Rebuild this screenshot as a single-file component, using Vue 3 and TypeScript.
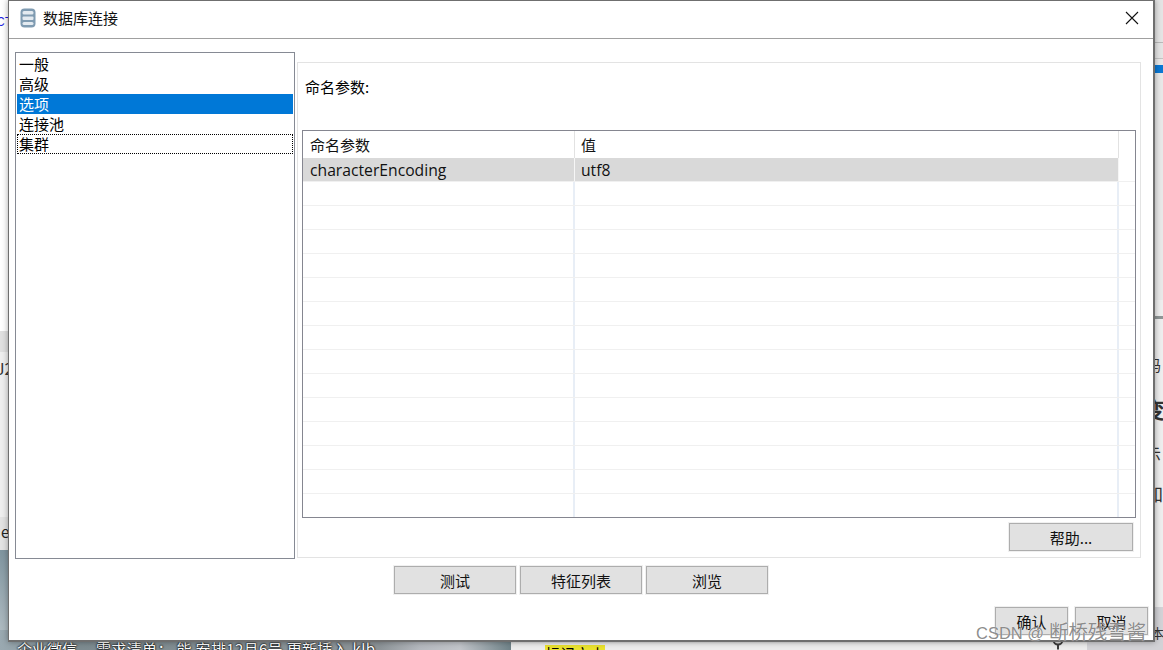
<script setup lang="ts">
const navItems = ['一般', '高级', '选项', '连接池', '集群']
const selectedNav = 2
const focusedNav = 4
const emptyRows = Array.from({ length: 14 }, (_, i) => i)
const footerActions = ['测试', '特征列表', '浏览']
</script>

<template>
  <div class="desktop">
    <!-- stuff behind the dialog -->
    <div class="bg-left">
      <span class="bg-left__code">CT</span>
      <span class="bg-left__num">J2</span>
      <span class="bg-left__e">e</span>
    </div>
    <div class="bg-bottom">
      <div class="bg-bottom__photo">
        <span>企业微信</span>
        <span class="bg-bottom__msg">需求清单： 能 安排12月6号 更新插入.klb</span>
      </div>
      <div class="bg-bottom__page">
        <mark>标记文本</mark>
        <svg class="bg-bottom__gear" width="16" height="12" viewBox="0 0 16 12">
          <circle cx="8" cy="2" r="4.500" fill="none" stroke="#3d3d3d" stroke-width="2" />
          <path d="M8 6.500v5" stroke="#3d3d3d" stroke-width="2" />
        </svg>
        <span class="bg-bottom__band"></span>
      </div>
    </div>
    <div class="bg-right">
      <span class="bg-right__tab"></span>
      <span class="bg-right__t1">码</span>
      <span class="bg-right__t2">变</span>
      <span class="bg-right__t3">示</span>
      <span class="bg-right__t4">加</span>
      <span class="bg-right__t5">本</span>
    </div>

    <div class="dialog">
      <header class="titlebar">
        <svg class="titlebar__icon" width="16" height="20" viewBox="0 0 16 20">
          <rect x="0.500" y="0.500" width="15" height="19" rx="4" fill="#7f9bb1" />
          <rect x="2.500" y="3" width="11" height="3.500" rx="1.500" fill="#e3eaf0" />
          <rect x="2.500" y="8.500" width="11" height="3.500" rx="1" fill="#e3eaf0" />
          <rect x="2.500" y="14" width="11" height="3" rx="1.500" fill="#e3eaf0" />
        </svg>
        <span class="titlebar__text">数据库连接</span>
        <svg class="titlebar__close" width="14" height="14" viewBox="0 0 14 14">
          <path d="M1 1l12 12M13 1L1 13" stroke="#111" stroke-width="1.1" fill="none" />
        </svg>
      </header>

      <div class="body">
        <ul class="nav">
          <li
            v-for="(item, i) in navItems"
            :key="item"
            class="nav__item"
            :class="{ 'nav__item--selected': i === selectedNav, 'nav__item--focus': i === focusedNav }"
          >{{ item }}</li>
        </ul>

        <section class="panel">
          <div class="panel__label">命名参数:</div>
          <div class="grid">
            <div class="grid__row grid__row--head">
              <div class="grid__cell grid__cell--name">命名参数</div>
              <div class="grid__cell grid__cell--value">值</div>
              <div class="grid__cell grid__cell--tail"></div>
            </div>
            <div class="grid__row grid__row--selected">
              <div class="grid__cell grid__cell--name">characterEncoding</div>
              <div class="grid__cell grid__cell--value">utf8</div>
              <div class="grid__cell grid__cell--tail"></div>
            </div>
            <div v-for="r in emptyRows" :key="r" class="grid__row">
              <div class="grid__cell grid__cell--name"></div>
              <div class="grid__cell grid__cell--value"></div>
              <div class="grid__cell grid__cell--tail"></div>
            </div>
          </div>
          <div class="panel__foot">
            <button class="btn btn--help">帮助...</button>
          </div>
        </section>
      </div>

      <div class="actions">
        <button v-for="a in footerActions" :key="a" class="btn btn--action">{{ a }}</button>
      </div>

      <div class="confirm">
        <button class="btn btn--confirm">确认</button>
        <button class="btn btn--confirm">取消</button>
      </div>
    </div>

    <div class="watermark"><span class="watermark__latin">CSDN @</span>断桥残雪酱</div>
  </div>
</template>

<style>
html,
body {
  margin: 0;
  background: #e9e9e9;
  overflow: hidden;
}
</style>

<style scoped>
.desktop {
  position: relative;
  width: 1163px;
  height: 650px;
  overflow: hidden;
  font-family: "Noto Sans CJK SC", "Noto Sans", sans-serif;
  color: #000;
}

/* background behind the dialog */
.bg-left {
  position: absolute;
  left: 0;
  top: 0;
  width: 9px;
  height: 650px;
  background: linear-gradient(#fff 0 331px, #e0e0e0 331px 352px, #efefef 352px 517px, #e3e3e3 517px 550px, #7f949e 550px, #b9c3c9 650px);
  overflow: hidden;
}

.bg-left__code {
  position: absolute;
  left: -3px;
  top: 15px;
  font: 13px "Liberation Mono", monospace;
  color: #1a1ae0;
}

.bg-left__num {
  position: absolute;
  left: -4px;
  top: 358px;
  font-size: 16px;
  line-height: 20px;
  color: #333;
}

.bg-left__e {
  position: absolute;
  left: 1px;
  top: 522px;
  font-size: 15px;
  line-height: 20px;
  color: #222;
}

.bg-right {
  position: absolute;
  right: 0;
  top: 0;
  width: 10px;
  height: 650px;
  background: linear-gradient(#e4e4e4 0 42px, #b9b9b9 42px 43px, #e4e4e4 43px 58px, #c4c4c4 58px 59px, #e8e8e8 59px 65px, #0a78d4 65px 73px, #e8e8e8 73px 300px, #eee 300px 607px, #d2d2d6 607px);
  overflow: hidden;
}

.bg-right__tab {
  position: absolute;
  left: 0;
  top: 316px;
  width: 10px;
  height: 3px;
  background: #8f9696;
}

.bg-right__t1,
.bg-right__t2,
.bg-right__t3,
.bg-right__t4,
.bg-right__t5 {
  position: absolute;
  left: -7px;
  color: #333;
  font-size: 15px;
  line-height: 20px;
}

.bg-right__t1 { top: 355px; }
.bg-right__t2 { top: 395px; left: -10px; font-size: 22px; font-weight: 700; line-height: 26px; }
.bg-right__t3 { top: 443px; left: -8px; font-size: 16px; }
.bg-right__t4 { top: 483px; left: -8px; font-size: 18px; }
.bg-right__t5 { top: 623px; left: -2px; font-size: 13px; }

.bg-bottom {
  position: absolute;
  left: 0;
  right: 0;
  bottom: 0;
  height: 20px;
  display: flex;
  overflow: hidden;
}

.bg-bottom__photo {
  width: 511px;
  display: flex;
  align-items: flex-start;
  gap: 19px;
  box-sizing: border-box;
  padding: 10px 0 0 17px;
  background: linear-gradient(90deg, #9aa9b1, #7d8b90 80px, #8d9498 380px, #b5b9bf 420px, #c2c5ca 460px, #6f8288);
  color: #fff;
  font-size: 15px;
  line-height: 18px;
  text-shadow: 0 0 2px #000, 0 0 2px #000;
}

.bg-bottom__msg {
  white-space: nowrap;
  letter-spacing: 0.35px;
}

.bg-bottom__page {
  position: relative;
  flex: 1;
  background: linear-gradient(#c9c9c9 9px, #ececec 14px);
}

.bg-bottom__page mark {
  position: absolute;
  left: 34px;
  bottom: 0;
  display: block;
  height: 5px;
  overflow: hidden;
  background: #eae22e;
  font-size: 15px;
  line-height: 17px;
}

.bg-bottom__gear {
  position: absolute;
  left: 539px;
  bottom: 0;
}

.bg-bottom__band {
  position: absolute;
  left: 576px;
  bottom: 0;
  width: 76px;
  height: 20px;
  background: #d2d2d6;
}

/* dialog */
.dialog {
  position: absolute;
  left: 8px;
  top: 0;
  width: 1147px;
  height: 642px;
  box-sizing: border-box;
  border: 1px solid #6f6f6f;
  border-width: 1px 2px 2px 1px;
  background: #fff;
  display: flex;
  flex-direction: column;
  box-shadow: 0 0 6px rgba(0, 0, 0, 0.35);
}

.titlebar {
  height: 38px;
  flex: none;
  box-sizing: border-box;
  border-bottom: 1px solid #a0a0a0;
  display: flex;
  align-items: center;
  padding: 0 14px 3px 11px;
}

.titlebar__icon {
  margin-right: 7px;
}

.titlebar__text {
  font-size: 15px;
  line-height: 20px;
  color: #111;
}

.titlebar__close {
  margin-left: auto;
}

.body {
  display: flex;
  align-items: flex-start;
  gap: 2px;
  padding: 13px 6px 0 6px;
}

.nav {
  list-style: none;
  margin: 0;
  padding: 1px;
  width: 280px;
  height: 507px;
  box-sizing: border-box;
  border: 1px solid #868a94;
}

.nav__item {
  height: 20px;
  box-sizing: border-box;
  padding-left: 2px;
  font-size: 15px;
  line-height: 20px;
}

.nav__item--selected {
  background: #0078d7;
  color: #fff;
}

.nav__item--focus {
  outline: 1px dotted #000;
  outline-offset: -1px;
}

.panel {
  width: 844px;
  height: 496px;
  margin-top: 10px;
  box-sizing: border-box;
  border: 1px solid #e3e3e3;
  padding: 0 4px;
  display: flex;
  flex-direction: column;
}

.panel__label {
  height: 67px;
  flex: none;
  padding: 14px 0 0 3px;
  box-sizing: border-box;
  font-size: 15px;
  line-height: 20px;
}

.grid {
  height: 388px;
  flex: none;
  box-sizing: border-box;
  border: 1px solid #858690;
  overflow: hidden;
}

.grid__row {
  height: 24px;
  display: flex;
  box-sizing: border-box;
  border-bottom: 1px solid #f0f0f0;
}

.grid__row--head {
  height: 27px;
  border-bottom: 0;
}

.grid__cell {
  box-sizing: border-box;
  padding-left: 7px;
  font-size: 15px;
  line-height: 28px;
  color: #111;
}

.grid__row--selected .grid__cell {
  font-family: "Open Sans", "Noto Sans", sans-serif;
  font-size: 15.7px;
  line-height: 25px;
}

.grid__cell--name {
  width: 272px;
  flex: none;
  border-right: 2px solid #e8eef6;
}

.grid__cell--value {
  width: 544px;
  flex: none;
  padding-left: 6px;
  border-right: 2px solid #e8eef6;
}

.grid__cell--tail {
  flex: 1;
}

.grid__row--head .grid__cell--name,
.grid__row--head .grid__cell--value {
  border-right: 1px solid #e2e2e2;
}

.grid__row--selected .grid__cell--name,
.grid__row--selected .grid__cell--value {
  background: #d9d9d9;
  border-right: 1px solid #f6f6f6;
}

.panel__foot {
  display: flex;
  justify-content: flex-end;
  padding: 5px 3px 0 0;
}

.btn {
  box-sizing: border-box;
  border: 1px solid #adadad;
  outline: 1px solid #f0f0f0;
  background: #e1e1e1;
  padding: 0;
  font-family: inherit;
  font-size: 15px;
  color: #111;
  height: 28px;
}

.btn--help {
  width: 124px;
}

.actions {
  display: flex;
  justify-content: center;
  gap: 4px;
  padding: 7px 0 0 0;
}

.btn--action {
  width: 122px;
}

.confirm {
  display: flex;
  justify-content: flex-end;
  gap: 7px;
  padding: 13px 5px 0 0;
}

.btn--confirm {
  width: 73px;
}

.watermark {
  position: absolute;
  left: 976px;
  top: 620px;
  font-size: 19.4px;
  line-height: 22px;
  color: rgba(110, 110, 110, 0.8);
  white-space: nowrap;
  text-shadow: 0 0 1px #fff;
}

.watermark__latin {
  font-family: "Liberation Sans", sans-serif;
  font-size: 16.5px;
  margin-right: 5px;
}
</style>
